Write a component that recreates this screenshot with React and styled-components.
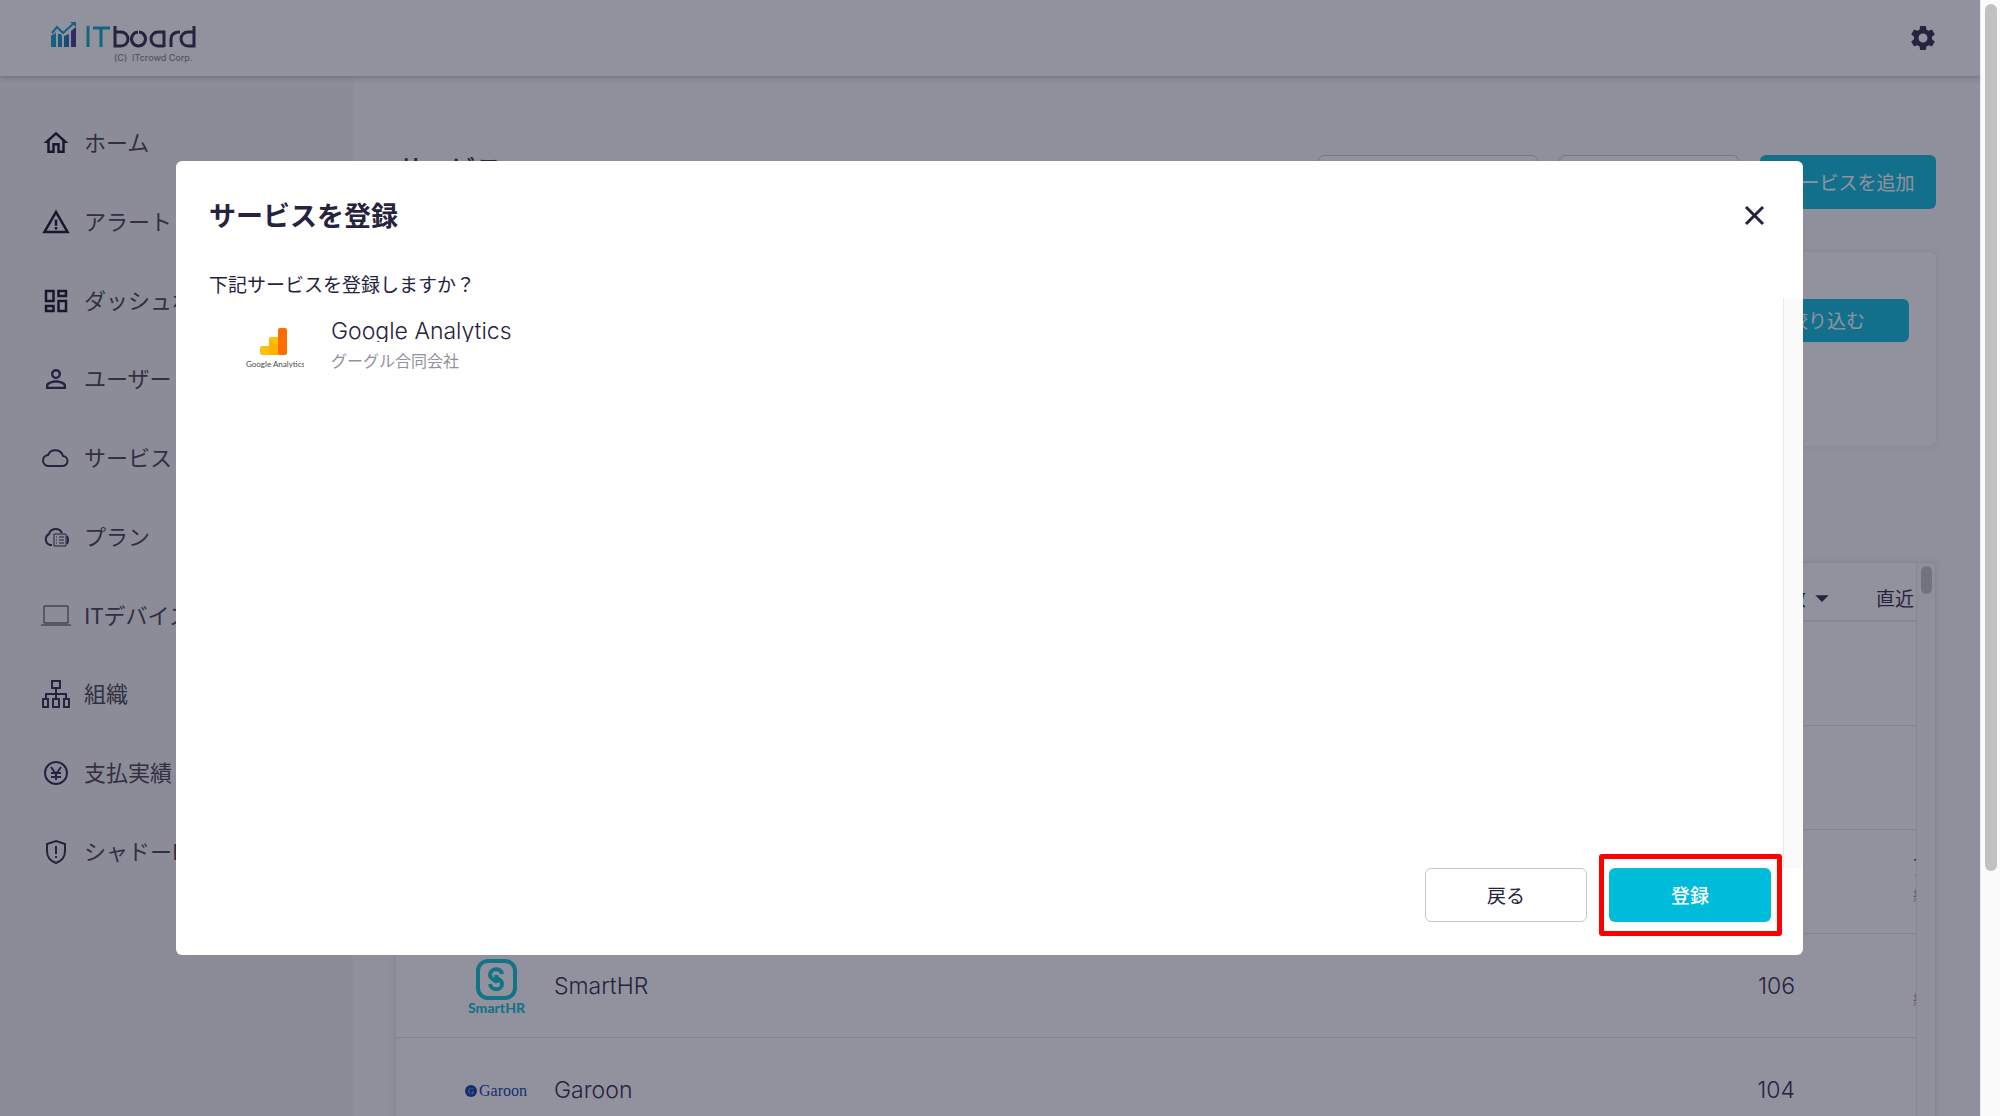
import React from "react";
import styled, { createGlobalStyle } from "styled-components";
import { MdSettings, MdOutlineHome, MdWarningAmber, MdOutlineDashboard, MdPersonOutline, MdArrowDropDown } from "react-icons/md";

const GlobalStyle = createGlobalStyle`
  * {
    box-sizing: border-box;
  }
  html, body, #root {
    height: 100%;
  }
  body {
    margin: 0;
    overflow: hidden;
    color: #25233d;
    font-family: "Noto Sans CJK JP", "Noto Sans", sans-serif;
    font-size: 19px;
  }
  button {
    font-family: inherit;
    cursor: pointer;
  }
`;

const Page = styled("div")`
  height: 100vh;
  display: flex;
  overflow: hidden;
  background: #fafafa;
`;

const Screen = styled("div")`
  flex: 1;
  min-width: 0;
  display: flex;
  flex-direction: column;
  overflow: hidden;
  position: relative;
`;

const Header = styled("header")`
  flex: none;
  height: 76px;
  padding: 0 42px 0 51px;
  display: flex;
  align-items: center;
  justify-content: space-between;
  background: #ffffff;
  box-shadow: 0 1px 6px rgba(0,0,0,0.3);
  z-index: 1;
`;

const IconButton = styled("button")`
  display: flex;
  padding: 0;
  border: 0;
  background: none;
  color: #25233d;
`;

const Content = styled("div")`
  flex: 1;
  min-height: 0;
  display: flex;
`;

const Sidebar = styled("nav")`
  flex: none;
  width: 353px;
  padding: 28px 0 0 41px;
  background: #f3f3f3;
`;

const MenuList = styled("ul")`
  height: 787px;
  margin: 0;
  padding: 0;
  list-style: none;
  display: grid;
  grid-auto-rows: 1fr;
`;

const MenuLink = styled("a")`
  height: 100%;
  display: flex;
  align-items: center;
  gap: 13px;
  color: #3c3b45;
  font-size: 22px;
  white-space: nowrap;
  text-decoration: none;

  svg {
    flex: none;
    color: ${props => props.$dark ? "#0b0a1c" : "#25233d"};
  }
`;

const MenuLabel = styled("span")`
  padding-bottom: 4px;
`;

const Main = styled("main")`
  flex: 1;
  min-width: 0;
  padding: 79px 44px 0 42px;
  overflow: hidden;
`;

const TitleRow = styled("div")`
  display: flex;
  align-items: flex-start;
  gap: 21px;
  height: 97px;
`;

const PageTitle = styled("h1")`
  flex: 1;
  margin: 0;
  padding-left: 3px;
  font-size: 26px;
  line-height: 26px;
  font-weight: 500;
`;

const Button = styled("button")`
  width: ${props => props.$width || 162}px;
  height: ${props => props.$height || 54}px;
  padding: 0 0 2px;
  border: ${props => props.$primary ? "0" : "1px solid #c8c8cc"};
  border-radius: 6px;
  background: ${props => props.$primary ? "#00bcdb" : "#ffffff"};
  color: ${props => props.$primary ? "#ffffff" : "#25233d"};
  font-size: 19px;
  font-weight: ${props => props.$strong ? 500 : 400};
`;

const FilterPanel = styled("section")`
  height: 194px;
  padding: 47px 27px;
  display: flex;
  justify-content: flex-end;
  align-items: flex-start;
  border-radius: 6px;
  background: #ffffff;
  box-shadow: 0 0 6px rgba(0,0,0,0.1);
`;

const TablePanel = styled("section")`
  display: flex;
  height: 700px;
  margin-top: 116px;
  border: 1px solid #e8e8ea;
  background: #ffffff;
  box-shadow: 0 0 6px rgba(0,0,0,0.1);
`;

const TableClip = styled("div")`
  flex: 1;
  min-width: 0;
  overflow: hidden;
`;

const Table = styled("table")`
  width: 100%;
  border-collapse: collapse;
  table-layout: fixed;
`;

const Th = styled("th")`
  height: 58px;
  padding: 12px 2px 0 0;
  border-bottom: 2px solid #e8e8ea;
  font-size: 19px;
  font-weight: 400;
  text-align: right;
  white-space: nowrap;
`;

const SortLabel = styled("span")`
  display: flex;
  align-items: center;
  justify-content: flex-end;
`;

const Td = styled("td")`
  height: 104px;
  padding: 2px 0 0;
  border-bottom: 1px solid #e2e2e6;
  font-family: Inter, "Noto Sans CJK JP", sans-serif;
  font-size: 23px;
  font-weight: 300;
  white-space: nowrap;
`;

const CountTd = styled(Td)`
  padding-right: 45px;
  text-align: right;
`;

const CostTd = styled(Td)`
  padding-left: 73px;
  line-height: 28px;
`;

const CostNote = styled("small")`
  display: block;
  min-height: 28px;
  color: #6f6e7c;
  font-size: 16px;
`;

const CostValue = styled("div")`
  min-height: 28px;
`;

const LogoCell = styled("div")`
  display: flex;
  justify-content: center;
  padding: 0 0 3px 43px;
`;

const InnerTrack = styled("div")`
  flex: none;
  width: 19px;
  padding: 3px 3px 0 4px;
  border-left: 1px solid #e8e8e8;
  background: #fafafa;
`;

const InnerThumb = styled("div")`
  width: 11px;
  height: 28px;
  border-radius: 6px;
  background: #c1c1c1;
`;

const PageTrack = styled("div")`
  flex: none;
  width: 20px;
  padding: 4px 3px 0 4px;
  border-left: 1px solid #e8e8e8;
  background: #fafafa;
`;

const PageThumb = styled("div")`
  width: 12px;
  height: 78%;
  border-radius: 6px;
  background: #c1c1c1;
`;

const Overlay = styled("div")`
  position: absolute;
  inset: 0;
  z-index: 2;
  padding: 161px 177px 161px 176px;
  display: flex;
  background: rgba(37,35,61,0.5);
`;

const Modal = styled("div")`
  flex: 1;
  min-width: 0;
  display: flex;
  flex-direction: column;
  border-radius: 6px;
  background: #ffffff;
  color: #25233d;
`;

const ModalHeader = styled("div")`
  display: flex;
  align-items: center;
  justify-content: space-between;
  padding: 34px 33px 0;
`;

const ModalTitle = styled("h2")`
  margin: 0;
  font-size: 27px;
  line-height: 40px;
  font-weight: 700;
`;

const Question = styled("p")`
  margin: 0;
  padding: 34px 33px 0;
  font-size: 19px;
  line-height: 29px;
`;

const ModalBody = styled("div")`
  flex: 1;
  min-height: 0;
  display: flex;
`;

const ServiceArea = styled("div")`
  flex: 1;
  padding: 22px 0 0 70px;
`;

const ServiceItem = styled("div")`
  display: flex;
  align-items: flex-start;
  gap: 27px;
`;

const ServiceName = styled("div")`
  height: 22px;
  overflow: hidden;
  font-family: Inter, sans-serif;
  font-size: 23px;
  line-height: 22px;
  font-weight: 300;
`;

const Company = styled("div")`
  margin-top: 6px;
  color: #92919e;
  font-size: 16px;
  line-height: 24px;
`;

const BodyTrack = styled("div")`
  flex: none;
  width: 20px;
  border-left: 1px solid #e8e8e8;
  background: #fafafa;
`;

const ModalFooter = styled("div")`
  display: flex;
  justify-content: flex-end;
  gap: 22px;
  padding: 0 32px 33px;
`;

const Highlight = styled("div")`
  position: relative;

  &::after {
    content: "";
    position: absolute;
    inset: -14px -11px -14px -10px;
    border: 5px solid #ff0000;
    border-radius: 3px;
    pointer-events: none;
  }
`;

const Logo = () => (
  <svg width="146" height="50" viewBox="0 -6 146 50" role="img" aria-label="ITboard">
    <g>
      <path d="M0 17L5 12V28H0Z" fill="#00a0c0" />
      <path d="M7 15H11V28H7Z" fill="#0090b8" />
      <path d="M13 17L18 15V28H13Z" fill="#1070a8" />
      <path d="M20 12L25 8V28H20Z" fill="#35358a" />
      <path d="M1 14L6 8L12 14L23 4" fill="none" stroke="#fff" strokeWidth="5" />
      <path d="M1 14L6 8L12 14L23 4" fill="none" stroke="#00a0c0" strokeWidth="2" />
      <path d="M19 3H25V8Z" fill="#00a0c0" />
    </g>
    <g fill="none" strokeWidth="3">
      <path d="M37 7V28M42 9H59M50 9V28" stroke="#00a5bd" />
      <path d="M64 7V27H70A7 7 0 1 0 70 13H64M88 13A7 7 0 1 1 87 13M113 28V13H107A7 7 0 1 0 107 27H113M120 28V20Q120 13 129 13M143 7V27H137A7 7 0 1 1 137 13H143" stroke="#25233d" />
    </g>
    <text x="63" y="42" fontSize="9" fontWeight="500" fill="#85858c" fontFamily="Inter, sans-serif" xmlSpace="preserve">(C)  ITcrowd Corp.</text>
  </svg>
);

const AnalyticsLogo = () => (
  <svg width="58" height="54" viewBox="0 0 58 54" role="img" aria-label="Google Analytics">
    <path d="M16 26h7v-7q0-2 2-2h9v18H16q-2 0-2-2v-5q0-2 2-2z" fill="#ffc107" />
    <path d="M23 19L32 26V35H23z" fill="#ffb300" />
    <rect x="32" y="8" width="9" height="27" rx="2" fill="#ff6d00" />
    <text x="0" y="47" fontSize="8" fill="#4a4a4a" fontFamily="Lato, sans-serif">Google Analytics</text>
  </svg>
);

const SmartLogo = () => (
  <svg width="58" height="60" viewBox="0 0 58 60" role="img" aria-label="SmartHR">
    <rect x="10" y="6" width="37" height="37" rx="10" fill="none" stroke="#00c4cc" strokeWidth="4" />
    <path d="M34 19C33 12 22 13 22 20C22 25 28 24 29 28M22 29C23 36 34 36 34 29C34 24 28 25 28 20" fill="none" stroke="#00c4cc" strokeWidth="4" />
    <text x="0" y="58" fontSize="14" fontWeight="900" fill="#00c4cc" fontFamily="Lato, sans-serif">SmartHR</text>
  </svg>
);

const GaroonLogo = () => (
  <svg width="66" height="22" viewBox="0 0 66 22" role="img" aria-label="Garoon">
    <circle cx="7" cy="13" r="6" fill="#0038a0" />
    <text x="4" y="16" fontSize="8" fill="#aab8e0" fontFamily="Liberation Serif, serif">G</text>
    <text x="15" y="18" fontSize="16" fill="#0038a0" fontFamily="Liberation Serif, serif">Garoon</text>
  </svg>
);

const Stroke = ({ children }) => (
  <svg width="30" height="30" viewBox="0 0 30 30" fill="none" stroke="currentColor" strokeWidth="2">
    {children}
  </svg>
);

const CloseIcon = () => (
  <Stroke><path d="M6 7L23 24M23 7L6 24" strokeWidth="3" /></Stroke>
);

const CloudIcon = () => (
  <Stroke><path d="M8 23H21A5 5 0 0 0 22 13A8 8 0 0 0 7 12A5 5 0 0 0 8 23Z" strokeLinejoin="round" /></Stroke>
);

const PlanIcon = () => (
  <Stroke>
    <path d="M11 23H9A6 6 0 0 1 8 12A7 7 0 0 1 21 11M26 14Q28 18 26 22" />
    <path d="M13 12H25V24H13ZM18 15H23M18 18H23M18 21H23M15 15H16M15 18H16M15 21H16" strokeWidth="1" />
  </Stroke>
);

const DeviceIcon = () => (
  <Stroke><path d="M3 5H27V22H3ZM0 24H30" strokeWidth="1" /></Stroke>
);

const OrgIcon = () => (
  <Stroke>
    <path d="M11 2H19V9H11ZM15 9V20M5 20V15H25V20M2 20H7V28H2ZM12 20H18V28H12ZM23 20H28V28H23Z" />
  </Stroke>
);

const YenIcon = () => (
  <Stroke><circle cx="15" cy="15" r="11" /><path d="M10 9L15 16L20 9M15 15V22M10 15H20M10 19H20" /></Stroke>
);

const ShieldIcon = () => (
  <Stroke><path d="M15 4L24 7V14Q24 23 15 26Q6 23 6 14V7ZM15 9V17M15 19V21" /></Stroke>
);

const menu = [
  { name: "ホーム", icon: <MdOutlineHome size={30} />, dark: true },
  { name: "アラート", icon: <MdWarningAmber size={30} />, dark: true },
  { name: "ダッシュボード", icon: <MdOutlineDashboard size={30} />, dark: true },
  { name: "ユーザー", icon: <MdPersonOutline size={30} /> },
  { name: "サービス", icon: <CloudIcon /> },
  { name: "プラン", icon: <PlanIcon /> },
  { name: "ITデバイス", icon: <DeviceIcon /> },
  { name: "組織", icon: <OrgIcon /> },
  { name: "支払実績", icon: <YenIcon /> },
  { name: "シャドーIT", icon: <ShieldIcon /> },
];

const services = [
  {}, {},
  { cost: "7", note: "約" },
  { name: "SmartHR", count: 106, note: "約", logo: <SmartLogo /> },
  { name: "Garoon", count: 104, logo: <GaroonLogo /> },
];

export default function App() {
  return (
    <Page>
      <GlobalStyle />
      <Screen>
        <Header>
          <Logo />
          <IconButton aria-label="設定"><MdSettings size={30} /></IconButton>
        </Header>
        <Content>
          <Sidebar>
            <MenuList>
              {menu.map(item => (
                <li key={item.name}>
                  <MenuLink href="#" $dark={item.dark}>{item.icon}<MenuLabel>{item.name}</MenuLabel></MenuLink>
                </li>
              ))}
            </MenuList>
          </Sidebar>
          <Main>
            <TitleRow>
              <PageTitle>サービス</PageTitle>
              <Button $width={220} aria-label="エクスポート" />
              <Button $width={180} aria-label="インポート" />
              <Button $primary $width={176}>サービスを追加</Button>
            </TitleRow>
            <FilterPanel>
              <Button $primary $width={164} $height={43}>絞り込む</Button>
            </FilterPanel>
            <TablePanel>
              <TableClip>
                <Table>
                  <colgroup>
                    <col width="158" />
                    <col />
                    <col width="200" />
                    <col width="76" />
                  </colgroup>
                  <thead>
                    <tr>
                      <Th />
                      <Th />
                      <Th><SortLabel>数<MdArrowDropDown size={32} /></SortLabel></Th>
                      <Th>直近</Th>
                    </tr>
                  </thead>
                  <tbody>
                    {services.map((service, i) => (
                      <tr key={i}>
                        <Td><LogoCell>{service.logo}</LogoCell></Td>
                        <Td>{service.name}</Td>
                        <CountTd>{service.count}</CountTd>
                        <CostTd>
                          <CostValue>{service.cost}</CostValue>
                          <CostNote>{service.note}</CostNote>
                        </CostTd>
                      </tr>
                    ))}
                  </tbody>
                </Table>
              </TableClip>
              <InnerTrack><InnerThumb /></InnerTrack>
            </TablePanel>
          </Main>
        </Content>
        <Overlay>
          <Modal role="dialog" aria-labelledby="modal-title">
            <ModalHeader>
              <ModalTitle id="modal-title">サービスを登録</ModalTitle>
              <IconButton aria-label="閉じる"><CloseIcon /></IconButton>
            </ModalHeader>
            <Question>下記サービスを登録しますか？</Question>
            <ModalBody>
              <ServiceArea>
                <ServiceItem>
                  <AnalyticsLogo />
                  <div>
                    <ServiceName>Google Analytics</ServiceName>
                    <Company>グーグル合同会社</Company>
                  </div>
                </ServiceItem>
              </ServiceArea>
              <BodyTrack />
            </ModalBody>
            <ModalFooter>
              <Button>戻る</Button>
              <Highlight><Button $primary $strong>登録</Button></Highlight>
            </ModalFooter>
          </Modal>
        </Overlay>
      </Screen>
      <PageTrack><PageThumb /></PageTrack>
    </Page>
  );
}
